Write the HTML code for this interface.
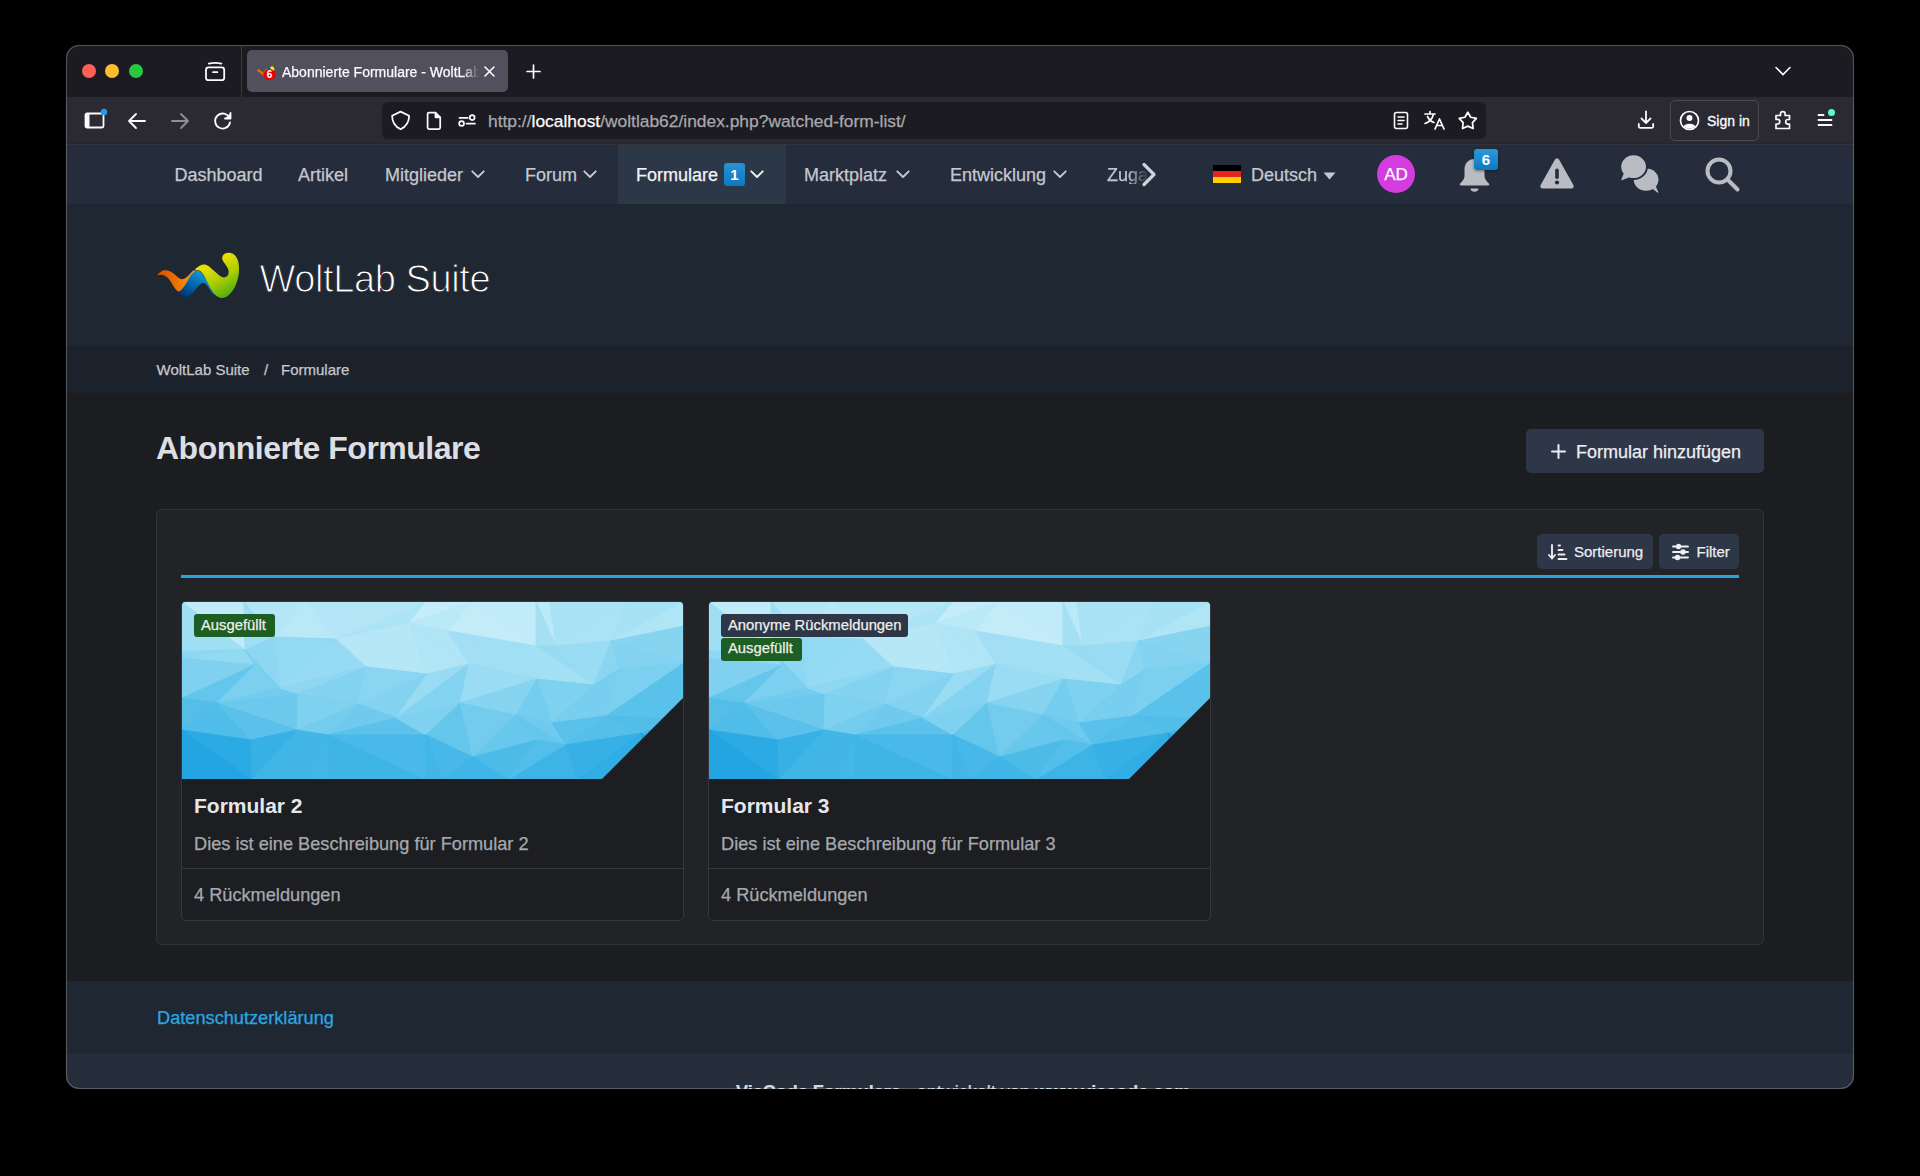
<!DOCTYPE html>
<html><head><meta charset="utf-8">
<style>
*{box-sizing:border-box;margin:0;padding:0}
html,body{width:1920px;height:1176px;background:#000;overflow:hidden;font-family:"Liberation Sans",sans-serif}
#win{position:absolute;left:66px;top:45px;width:1788px;height:1044px;border-radius:13px;overflow:hidden;background:#1c1b22}
#bd{position:absolute;left:66px;top:45px;width:1788px;height:1044px;border-radius:13px;border:1px solid rgba(255,255,255,0.24);box-shadow:inset 0 0 0.8px rgba(255,255,255,0.25), 0 0 0.8px rgba(255,255,255,0.2);pointer-events:none}
#s{position:absolute;left:-66px;top:-45px;width:1920px;height:1176px}
.a{position:absolute}
.t{position:absolute;white-space:nowrap;line-height:1;-webkit-text-stroke:0.25px currentColor}
.tl{position:absolute;top:64px;width:14px;height:14px;border-radius:50%}
svg{position:absolute;overflow:visible}
</style></head>
<body>
<svg width="0" height="0" style="position:absolute"><defs><symbol id="poly" viewBox="0 0 502 178" stroke-width="0.9" stroke-linejoin="round"><path d="M0 0 L62 0 L63 48 Z" fill="#c0ebf8" stroke="#c0ebf8"/><path d="M0 0 L63 48 L0 49 Z" fill="#a0def4" stroke="#a0def4"/><path d="M62 0 L123 0 L93 35 Z" fill="#b5e6f7" stroke="#b5e6f7"/><path d="M62 0 L93 35 L63 48 Z" fill="#9fdef4" stroke="#9fdef4"/><path d="M123 0 L181 0 L155 37 Z" fill="#b3e6f6" stroke="#b3e6f6"/><path d="M123 0 L155 37 L93 35 Z" fill="#b9e8f7" stroke="#b9e8f7"/><path d="M181 0 L244 0 L155 37 Z" fill="#b4e6f6" stroke="#b4e6f6"/><path d="M244 0 L227 21 L155 37 Z" fill="#ace3f5" stroke="#ace3f5"/><path d="M244 0 L290 0 L227 21 Z" fill="#c5edf9" stroke="#c5edf9"/><path d="M290 0 L266 29 L227 21 Z" fill="#bae9f7" stroke="#bae9f7"/><path d="M290 0 L354 0 L354 44 Z" fill="#c1ebf8" stroke="#c1ebf8"/><path d="M290 0 L354 44 L266 29 Z" fill="#c3ecf8" stroke="#c3ecf8"/><path d="M354 0 L368 0 L374 44 Z" fill="#bae9f7" stroke="#bae9f7"/><path d="M354 0 L374 44 L354 44 Z" fill="#a4e0f4" stroke="#a4e0f4"/><path d="M368 0 L445 0 L374 44 Z" fill="#a9e2f5" stroke="#a9e2f5"/><path d="M445 0 L429 39 L374 44 Z" fill="#abe2f5" stroke="#abe2f5"/><path d="M445 0 L502 0 L429 39 Z" fill="#a7e1f5" stroke="#a7e1f5"/><path d="M502 0 L502 24 L429 39 Z" fill="#b0e5f6" stroke="#b0e5f6"/><path d="M0 49 L63 48 L0 56 Z" fill="#8ed7f2" stroke="#8ed7f2"/><path d="M63 48 L73 63 L0 56 Z" fill="#92d9f2" stroke="#92d9f2"/><path d="M63 48 L93 35 L98 86 Z" fill="#8dd7f2" stroke="#8dd7f2"/><path d="M63 48 L98 86 L73 63 Z" fill="#7bcfef" stroke="#7bcfef"/><path d="M93 35 L155 37 L98 86 Z" fill="#92d9f2" stroke="#92d9f2"/><path d="M155 37 L185 65 L98 86 Z" fill="#96daf3" stroke="#96daf3"/><path d="M155 37 L227 21 L185 65 Z" fill="#b6e7f7" stroke="#b6e7f7"/><path d="M227 21 L245 72 L185 65 Z" fill="#b5e7f7" stroke="#b5e7f7"/><path d="M227 21 L266 29 L287 62 Z" fill="#b0e5f6" stroke="#b0e5f6"/><path d="M227 21 L287 62 L245 72 Z" fill="#b0e5f6" stroke="#b0e5f6"/><path d="M266 29 L354 44 L355 77 Z" fill="#a1dff4" stroke="#a1dff4"/><path d="M266 29 L355 77 L287 62 Z" fill="#a3dff4" stroke="#a3dff4"/><path d="M354 44 L374 44 L412 83 Z" fill="#97dbf3" stroke="#97dbf3"/><path d="M354 44 L412 83 L355 77 Z" fill="#a4e0f4" stroke="#a4e0f4"/><path d="M374 44 L429 39 L412 83 Z" fill="#9adcf3" stroke="#9adcf3"/><path d="M429 39 L437 67 L412 83 Z" fill="#8ad6f1" stroke="#8ad6f1"/><path d="M429 39 L502 24 L502 61 Z" fill="#87d4f1" stroke="#87d4f1"/><path d="M429 39 L502 61 L437 67 Z" fill="#83d3f0" stroke="#83d3f0"/><path d="M0 56 L73 63 L0 96 Z" fill="#80d1f0" stroke="#80d1f0"/><path d="M73 63 L35 101 L0 96 Z" fill="#64c6ec" stroke="#64c6ec"/><path d="M73 63 L98 86 L35 101 Z" fill="#7bcfef" stroke="#7bcfef"/><path d="M98 86 L116 92 L35 101 Z" fill="#73ccee" stroke="#73ccee"/><path d="M98 86 L185 65 L116 92 Z" fill="#8dd7f1" stroke="#8dd7f1"/><path d="M185 65 L176 102 L116 92 Z" fill="#82d2f0" stroke="#82d2f0"/><path d="M185 65 L245 72 L176 102 Z" fill="#8ad5f1" stroke="#8ad5f1"/><path d="M245 72 L214 116 L176 102 Z" fill="#83d2f0" stroke="#83d2f0"/><path d="M245 72 L287 62 L214 116 Z" fill="#98dbf3" stroke="#98dbf3"/><path d="M287 62 L278 101 L214 116 Z" fill="#84d3f0" stroke="#84d3f0"/><path d="M287 62 L355 77 L278 101 Z" fill="#9adcf3" stroke="#9adcf3"/><path d="M355 77 L334 113 L278 101 Z" fill="#87d4f1" stroke="#87d4f1"/><path d="M355 77 L412 83 L370 121 Z" fill="#7fd1f0" stroke="#7fd1f0"/><path d="M355 77 L370 121 L334 113 Z" fill="#74ccee" stroke="#74ccee"/><path d="M412 83 L437 67 L370 121 Z" fill="#77ceee" stroke="#77ceee"/><path d="M437 67 L424 114 L370 121 Z" fill="#77ceef" stroke="#77ceef"/><path d="M437 67 L502 61 L424 114 Z" fill="#7cd0ef" stroke="#7cd0ef"/><path d="M502 61 L502 117 L424 114 Z" fill="#5ac1ea" stroke="#5ac1ea"/><path d="M0 96 L35 101 L0 128 Z" fill="#54bee9" stroke="#54bee9"/><path d="M35 101 L69 138 L0 128 Z" fill="#4fbce9" stroke="#4fbce9"/><path d="M35 101 L116 92 L115 128 Z" fill="#6cc9ed" stroke="#6cc9ed"/><path d="M35 101 L115 128 L69 138 Z" fill="#5bc1eb" stroke="#5bc1eb"/><path d="M116 92 L176 102 L115 128 Z" fill="#7ed1ef" stroke="#7ed1ef"/><path d="M176 102 L146 133 L115 128 Z" fill="#75cdee" stroke="#75cdee"/><path d="M176 102 L214 116 L146 133 Z" fill="#6fcaed" stroke="#6fcaed"/><path d="M214 116 L244 133 L146 133 Z" fill="#5cc2eb" stroke="#5cc2eb"/><path d="M214 116 L278 101 L244 133 Z" fill="#7fd1f0" stroke="#7fd1f0"/><path d="M278 101 L291 155 L244 133 Z" fill="#65c6ec" stroke="#65c6ec"/><path d="M278 101 L334 113 L291 155 Z" fill="#73ccee" stroke="#73ccee"/><path d="M334 113 L355 138 L291 155 Z" fill="#67c7ec" stroke="#67c7ec"/><path d="M334 113 L370 121 L384 143 Z" fill="#6fcaed" stroke="#6fcaed"/><path d="M334 113 L384 143 L355 138 Z" fill="#65c6ec" stroke="#65c6ec"/><path d="M370 121 L424 114 L384 143 Z" fill="#5ac1ea" stroke="#5ac1ea"/><path d="M424 114 L459 131 L384 143 Z" fill="#55bfea" stroke="#55bfea"/><path d="M424 114 L502 117 L459 131 Z" fill="#51bde9" stroke="#51bde9"/><path d="M502 117 L502 150 L459 131 Z" fill="#42b6e7" stroke="#42b6e7"/><path d="M0 128 L69 138 L70 178 Z" fill="#2baae3" stroke="#2baae3"/><path d="M0 128 L70 178 L0 178 Z" fill="#22a5e1" stroke="#22a5e1"/><path d="M69 138 L115 128 L70 178 Z" fill="#37b1e5" stroke="#37b1e5"/><path d="M115 128 L128 178 L70 178 Z" fill="#40b5e6" stroke="#40b5e6"/><path d="M115 128 L146 133 L128 178 Z" fill="#42b6e7" stroke="#42b6e7"/><path d="M146 133 L146 178 L128 178 Z" fill="#45b7e7" stroke="#45b7e7"/><path d="M146 133 L244 133 L244 178 Z" fill="#48b9e8" stroke="#48b9e8"/><path d="M146 133 L244 178 L146 178 Z" fill="#3fb5e6" stroke="#3fb5e6"/><path d="M244 133 L291 155 L260 178 Z" fill="#47b8e8" stroke="#47b8e8"/><path d="M244 133 L260 178 L244 178 Z" fill="#41b6e7" stroke="#41b6e7"/><path d="M291 155 L355 138 L327 178 Z" fill="#4dbbe8" stroke="#4dbbe8"/><path d="M291 155 L327 178 L260 178 Z" fill="#41b5e7" stroke="#41b5e7"/><path d="M355 138 L384 143 L327 178 Z" fill="#53bee9" stroke="#53bee9"/><path d="M384 143 L396 178 L327 178 Z" fill="#3eb4e6" stroke="#3eb4e6"/><path d="M384 143 L459 131 L396 178 Z" fill="#36b0e5" stroke="#36b0e5"/><path d="M459 131 L466 178 L396 178 Z" fill="#30ade4" stroke="#30ade4"/><path d="M459 131 L502 150 L502 178 Z" fill="#2baae3" stroke="#2baae3"/><path d="M459 131 L502 178 L466 178 Z" fill="#21a4e1" stroke="#21a4e1"/></symbol></defs></svg>
<div id="win"><div id="s">
<div class="a" style="left:0px;top:0px;width:1920px;height:97px;background:#1c1b22;"></div>
<div class="tl" style="left:81.6px;background:#fe5f57"></div><div class="tl" style="left:105px;background:#febc2e"></div><div class="tl" style="left:129px;background:#28c840"></div>
<svg style="left:204px;top:60px" width="22" height="22" viewBox="0 0 22 22" fill="none" stroke="#fbfbfe" stroke-width="1.8" stroke-linecap="round">
<rect x="2" y="7.4" width="18.2" height="12.8" rx="2.5"/><path d="M4.8 3.6 Q11 2.2 17.4 3.6"/><path d="M9 12.2h4.4"/></svg>
<div class="a" style="left:241px;top:46px;width:1px;height:51px;background:#3a3941;"></div>
<div class="a" style="left:247px;top:50px;width:261px;height:42px;background:#52505d;border-radius:5px"></div>
<svg style="left:256px;top:62px" width="20" height="20" viewBox="0 0 20 20">
<path d="M2.2 8.2 C4 9 5.5 10.5 6.8 11.8 L10.5 8.2" stroke="#f07000" stroke-width="2.2" fill="none" stroke-linecap="round"/><path d="M7 12 L9.5 9.5" stroke="#1a70c0" stroke-width="1.5"/>
<ellipse cx="16.4" cy="6.8" rx="1.9" ry="2.6" fill="#f2ee00" transform="rotate(-20 16.4 6.8)"/>
<circle cx="13.6" cy="12.6" r="5.7" fill="#e60000"/>
<text x="13.6" y="16.3" font-size="10" font-weight="700" fill="#fff" text-anchor="middle" font-family="Liberation Sans">6</text></svg>
<div class="t" style="left:282px;top:64.6px;font-size:14px;color:#fbfbfe;font-weight:400;width:197px;overflow:hidden;-webkit-mask-image:linear-gradient(90deg,#000 92%,transparent)">Abonnierte Formulare - WoltLab Suite</div>
<svg style="left:484px;top:66px" width="11" height="11" viewBox="0 0 11 11" stroke="#fbfbfe" stroke-width="1.6" stroke-linecap="round"><path d="M1 1L10 10M10 1L1 10"/></svg>
<svg style="left:526px;top:64px" width="15" height="15" viewBox="0 0 15 15" stroke="#fbfbfe" stroke-width="1.7" stroke-linecap="round"><path d="M7.5 1v13M1 7.5h13"/></svg>
<svg style="left:1775px;top:66px" width="16" height="10" viewBox="0 0 16 10" fill="none" stroke="#fbfbfe" stroke-width="1.6" stroke-linecap="round"><path d="M1 1.5l7 7 7-7"/></svg>
<div class="a" style="left:0px;top:97px;width:1920px;height:47px;background:#2b2a33;"></div>
<svg style="left:84px;top:108px" width="24" height="22" viewBox="0 0 24 22" fill="none" stroke="#fbfbfe" stroke-width="1.8">
<rect x="1.5" y="5.5" width="18" height="14" rx="1.5"/><rect x="2" y="6" width="3.5" height="13" fill="#fbfbfe" stroke="none"/><circle cx="20" cy="4" r="3.2" fill="#1f9bf0" stroke="none"/></svg>
<svg style="left:127px;top:112px" width="20" height="18" viewBox="0 0 20 18" fill="none" stroke="#fbfbfe" stroke-width="1.8" stroke-linecap="round" stroke-linejoin="round"><path d="M18 9H2M9 2L2 9l7 7"/></svg>
<svg style="left:170px;top:112px" width="20" height="18" viewBox="0 0 20 18" fill="none" stroke="#8f8f95" stroke-width="1.8" stroke-linecap="round" stroke-linejoin="round"><path d="M2 9h16M11 2l7 7-7 7"/></svg>
<svg style="left:213px;top:111px" width="20" height="20" viewBox="0 0 20 20" fill="none" stroke="#fbfbfe" stroke-width="1.8" stroke-linecap="round"><path d="M16.5 7A7.5 7.5 0 1 0 17 11.5"/><path d="M17.5 2v5.5h-5.5" fill="#fbfbfe" stroke-linejoin="round"/></svg>
<div class="a" style="left:382px;top:102px;width:1104px;height:37px;background:#1c1b22;border-radius:6px"></div>
<svg style="left:385px;top:105px" width="100" height="32" viewBox="0 0 100 32" fill="none" stroke="#fbfbfe" stroke-width="1.75" stroke-linejoin="round" stroke-linecap="round">
<path d="M15.6 6.6 L24.1 10.8 C24.1 17.5 21.5 21.5 15.6 24.3 C9.7 21.5 7.1 17.5 7.1 10.8 Z"/>
<path d="M44 7.6 H50.5 L55.2 12.3 V22.6 Q55.2 24 53.8 24 H44 Q42.6 24 42.6 22.6 V9 Q42.6 7.6 44 7.6Z"/><path d="M50.5 7.8 V12.3 H55" fill="#fbfbfe"/>
<path d="M74.5 12.8 H82.8 M81.5 18.5 H90"/><circle cx="87.2" cy="12.6" r="2.4"/><circle cx="76.6" cy="18.5" r="2.4"/>
</svg>
<div class="t" style="left:488px;top:112.9px;font-size:17.4px;color:#a8a8ad;font-weight:400;">http://<span style="color:#fbfbfe">localhost</span>/woltlab62/index.php?watched-form-list/</div>
<svg style="left:1393px;top:111px" width="17" height="19" viewBox="0 0 17 19" fill="none" stroke="#fbfbfe" stroke-width="1.6" stroke-linecap="round"><rect x="1.5" y="1.5" width="13" height="16" rx="2"/><path d="M5 6h6M5 9.5h6M5 13h4"/></svg>
<svg style="left:1424px;top:110px" width="22" height="20" viewBox="0 0 22 20" fill="none" stroke="#fbfbfe" stroke-width="1.7" stroke-linecap="round" stroke-linejoin="round"><path d="M1 4h10M6 1.5V4M9.5 4c-1 4.5-4 8-8.5 9.5M3.5 6.5c1.5 3 3.5 5 6.5 6"/><path d="M11 19l4.5-10 4.5 10M12.5 15.5h6"/></svg>
<svg style="left:1458px;top:110px" width="20" height="21" viewBox="0 0 20 21" fill="none" stroke="#fbfbfe" stroke-width="1.75" stroke-linejoin="round"><path d="M9.80 2.20 L12.68 7.24 L18.36 8.42 L14.46 12.71 L15.09 18.48 L9.80 16.10 L4.51 18.48 L5.14 12.71 L1.24 8.42 L6.92 7.24Z"/></svg>
<svg style="left:1636px;top:110px" width="20" height="20" viewBox="0 0 20 20" fill="none" stroke="#fbfbfe" stroke-width="1.8" stroke-linecap="round" stroke-linejoin="round"><path d="M10 1.5v11.5M5.5 8.5l4.5 4.5 4.5-4.5M2.8 14v2.6q0 1.2 1.2 1.2h12q1.2 0 1.2-1.2V14"/></svg>
<div class="a" style="left:1670px;top:100px;width:89px;height:41px;background:transparent;border-radius:5px;border:1.5px solid #4a4951"></div>
<svg style="left:1679px;top:110px" width="21" height="21" viewBox="0 0 21 21"><defs><clipPath id="cc"><circle cx="10.5" cy="10.5" r="8.2"/></clipPath></defs><circle cx="10.5" cy="10.5" r="9" fill="none" stroke="#fbfbfe" stroke-width="1.7"/><circle cx="10.5" cy="8" r="3" fill="#fbfbfe"/><ellipse cx="10.5" cy="17.8" rx="6.5" ry="4" fill="#fbfbfe" clip-path="url(#cc)"/></svg>
<div class="t" style="left:1707px;top:114.4px;font-size:14px;color:#fbfbfe;font-weight:400;-webkit-text-stroke:0.3px #fbfbfe">Sign in</div>
<svg style="left:1774px;top:110px" width="19" height="20" viewBox="0 0 19 20" fill="none" stroke="#fbfbfe" stroke-width="1.7" stroke-linejoin="round"><path d="M2 9V5.5h4.5V4a2.3 2.3 0 0 1 4.6 0v1.5h4.4v4h-1.5a2.3 2.3 0 0 0 0 4.6h1.5v4.4H2v-4.5h1.5a2.3 2.3 0 0 0 0-4.6H2z"/></svg>
<svg style="left:1816px;top:108px" width="22" height="20" viewBox="0 0 22 20" fill="none" stroke="#fbfbfe" stroke-width="1.8" stroke-linecap="round"><path d="M2.5 7h5M2.5 12h13M2.5 17h13"/><circle cx="15.5" cy="4.5" r="3.5" fill="#54ffbd" stroke="none"/></svg>
<div class="a" style="left:0px;top:143px;width:1920px;height:1px;background:#26252b;"></div>
<div class="a" style="left:0px;top:144px;width:1920px;height:1px;background:#35343c;"></div>
<div class="a" style="left:0px;top:145px;width:1920px;height:59px;background:#252d3c;"></div>
<div class="a" style="left:618px;top:145px;width:168px;height:59px;background:#2c3748;"></div>
<div class="t" style="left:174.5px;top:166.2px;font-size:18px;color:#c5c8ce;font-weight:400;">Dashboard</div>
<div class="t" style="left:298px;top:166.2px;font-size:18px;color:#c5c8ce;font-weight:400;">Artikel</div>
<div class="t" style="left:385px;top:166.2px;font-size:18px;color:#c5c8ce;font-weight:400;">Mitglieder</div>
<div class="t" style="left:525px;top:166.2px;font-size:18px;color:#c5c8ce;font-weight:400;">Forum</div>
<div class="t" style="left:804px;top:166.2px;font-size:18px;color:#c5c8ce;font-weight:400;">Marktplatz</div>
<div class="t" style="left:950px;top:166.2px;font-size:18px;color:#c5c8ce;font-weight:400;">Entwicklung</div>
<div class="t" style="left:636px;top:166.2px;font-size:18px;color:#f2f3f5;font-weight:400;">Formulare</div>
<div class="t" style="left:1107px;top:166.2px;font-size:18px;color:#c5c8ce;font-weight:400;width:44px;overflow:hidden;-webkit-mask-image:linear-gradient(90deg,#000 45%,transparent 95%)">Zugang</div>
<svg style="left:471px;top:170px" width="14" height="9" viewBox="0 0 14 9" fill="none" stroke="#c5c8ce" stroke-width="1.9" stroke-linecap="round" stroke-linejoin="round"><path d="M1.3 1.3l5.7 5.7 5.7-5.7"/></svg>
<svg style="left:583px;top:170px" width="14" height="9" viewBox="0 0 14 9" fill="none" stroke="#c5c8ce" stroke-width="1.9" stroke-linecap="round" stroke-linejoin="round"><path d="M1.3 1.3l5.7 5.7 5.7-5.7"/></svg>
<svg style="left:896px;top:170px" width="14" height="9" viewBox="0 0 14 9" fill="none" stroke="#c5c8ce" stroke-width="1.9" stroke-linecap="round" stroke-linejoin="round"><path d="M1.3 1.3l5.7 5.7 5.7-5.7"/></svg>
<svg style="left:1053px;top:170px" width="14" height="9" viewBox="0 0 14 9" fill="none" stroke="#c5c8ce" stroke-width="1.9" stroke-linecap="round" stroke-linejoin="round"><path d="M1.3 1.3l5.7 5.7 5.7-5.7"/></svg>
<svg style="left:750px;top:170px" width="14" height="9" viewBox="0 0 14 9" fill="none" stroke="#f2f3f5" stroke-width="1.9" stroke-linecap="round" stroke-linejoin="round"><path d="M1.3 1.3l5.7 5.7 5.7-5.7"/></svg>
<div class="a" style="left:724px;top:163px;width:21px;height:23px;background:linear-gradient(#2893d4,#0c78c0);border-radius:3px"></div>
<div class="t" style="left:724px;top:167.3px;font-size:15px;color:#fff;font-weight:700;-webkit-text-stroke:0;width:21px;text-align:center">1</div>
<svg style="left:1141px;top:162px" width="16" height="25" viewBox="0 0 16 25" fill="none" stroke="#d0d3d8" stroke-width="3.2" stroke-linecap="round" stroke-linejoin="round"><path d="M3 2.5l10 10-10 10"/></svg>
<div class="a" style="left:1213px;top:165.2px;width:28px;height:6.1px;background:#000;"></div>
<div class="a" style="left:1213px;top:171.2px;width:28px;height:6.1px;background:#e2231e;"></div>
<div class="a" style="left:1213px;top:177.2px;width:28px;height:6px;background:#ffcd00;"></div>
<div class="t" style="left:1251px;top:166.2px;font-size:18px;color:#c5c8ce;font-weight:400;">Deutsch</div>
<svg style="left:1323px;top:172px" width="13" height="8" viewBox="0 0 13 8"><path d="M0.5 0.5h12l-6 7z" fill="#c5c8ce"/></svg>
<div class="a" style="left:1377px;top:155px;width:38px;height:38px;background:#d43ce0;border-radius:50%"></div>
<div class="t" style="left:1377px;top:166.1px;font-size:17px;color:#fff;font-weight:400;width:38px;text-align:center">AD</div>
<svg style="left:1458px;top:156px" width="33" height="36" viewBox="0 0 33 36"><path d="M16.5 3c-6 0-10 4.6-10 10.5v6.5c0 2.5-1.3 4.6-4.4 7.5-.8.8-.3 2 .8 2h27.2c1.1 0 1.6-1.2.8-2-3.1-2.9-4.4-5-4.4-7.5v-6.5C26.5 7.6 22.5 3 16.5 3z" fill="#b9bcc2"/><path d="M12.5 32.5h8c0 2-1.8 3.3-4 3.3s-4-1.3-4-3.3z" fill="#b9bcc2"/></svg>
<div class="a" style="left:1474px;top:149px;width:24px;height:21px;background:linear-gradient(#2c9ad8,#0c78c0);border-radius:3px;box-shadow:0 1px 3px rgba(0,0,0,0.45)"></div>
<div class="t" style="left:1474px;top:152.3px;font-size:15px;color:#fff;font-weight:700;-webkit-text-stroke:0;width:24px;text-align:center">6</div>
<svg style="left:1540px;top:157px" width="34" height="32" viewBox="0 0 34 32"><path d="M17 1.5c.9 0 1.7.5 2.2 1.3l14.2 25.2c.9 1.7-.3 3.5-2.2 3.5H2.8C.9 31.5-.3 29.7.6 28L14.8 2.8c.5-.8 1.3-1.3 2.2-1.3z" fill="#b9bcc2"/><path d="M17 13.2v7" stroke="#252d3c" stroke-width="3.6" stroke-linecap="round"/><circle cx="17" cy="25.5" r="2.1" fill="#252d3c"/></svg>
<svg style="left:1615px;top:150px" width="50" height="48" viewBox="0 0 50 48">
<ellipse cx="31.1" cy="29.6" rx="12.4" ry="11.2" fill="#b9bcc2"/><path d="M36.5 37.5 L42.9 42.4 L39.5 34.5Z" fill="#b9bcc2" stroke="#b9bcc2" stroke-width="1" stroke-linejoin="round"/>
<ellipse cx="18.6" cy="16.7" rx="14.3" ry="13.3" fill="#252d3c"/><path d="M8.5 22 L5.5 31 L15.5 27.5Z" fill="#252d3c" stroke="#252d3c" stroke-width="3" stroke-linejoin="round"/>
<ellipse cx="18.6" cy="16.7" rx="12.4" ry="11.4" fill="#b9bcc2"/><path d="M9.5 23 L6.7 29.8 L14 27Z" fill="#b9bcc2" stroke="#b9bcc2" stroke-width="1" stroke-linejoin="round"/>
</svg>
<svg style="left:1705px;top:157px" width="35" height="35" viewBox="0 0 35 35" fill="none" stroke="#b9bcc2" stroke-width="4" stroke-linecap="round"><circle cx="14" cy="14" r="11.5"/><path d="M22.5 22.5l10 10"/></svg>
<div class="a" style="left:0px;top:204px;width:1920px;height:142px;background:#1f2733;"></div>
<svg style="left:150px;top:245px" width="100" height="60" viewBox="0 0 1920 1152">
<defs>
<linearGradient id="gO" x1="0" y1="0" x2="1" y2="0"><stop offset="0" stop-color="#d84e00"/><stop offset="0.6" stop-color="#f07a00"/><stop offset="1" stop-color="#ffaa10"/></linearGradient>
<linearGradient id="gB" x1="0" y1="1" x2="0.7" y2="0"><stop offset="0" stop-color="#002a60"/><stop offset="0.45" stop-color="#0060a8"/><stop offset="1" stop-color="#1aa0dc"/></linearGradient>
<linearGradient id="gY" x1="0" y1="0" x2="0.6" y2="1"><stop offset="0" stop-color="#f0c040"/><stop offset="0.35" stop-color="#e8e000"/><stop offset="0.7" stop-color="#a8cc00"/><stop offset="1" stop-color="#58b010"/></linearGradient>
</defs>
<path d="M140 590 C200 470 320 450 450 545 C520 600 570 660 630 655 C700 645 760 560 830 490 L890 490 C800 560 740 700 680 810 C640 880 600 905 555 900 C470 860 420 720 350 640 C290 580 220 550 140 590Z" fill="url(#gO)"/>
<path d="M545 895 C620 880 680 760 760 620 C820 520 870 480 920 490 C980 500 1030 580 1090 680 C1150 790 1200 880 1260 940 L1220 950 C1140 860 1090 740 1030 730 C960 730 900 830 820 920 C760 990 700 1020 640 990 C600 970 570 930 545 895Z" fill="url(#gB)"/>
<path d="M860 470 C940 390 1000 365 1060 375 C1150 395 1250 540 1380 615 C1450 640 1520 600 1510 500 C1500 420 1420 360 1390 280 C1370 190 1450 140 1530 150 C1650 170 1710 280 1710 450 C1710 650 1640 870 1480 990 C1380 1050 1280 1000 1220 920 C1150 830 1100 700 1040 590 C1000 520 960 480 910 485 C890 485 875 480 860 470Z" fill="url(#gY)"/>
</svg>
<svg style="left:259px;top:250px" width="240" height="50"><text x="0.5" y="42" font-size="38" letter-spacing="-0.4" fill="#ffffff" stroke="#1f2733" stroke-width="1.1" font-family="Liberation Sans">WoltLab Suite</text></svg>
<div class="a" style="left:0px;top:346px;width:1920px;height:47px;background:#1c222c;"></div>
<div class="t" style="left:156.5px;top:362.0px;font-size:15px;color:#c5c8ce;font-weight:400;">WoltLab Suite</div>
<div class="t" style="left:264px;top:362.0px;font-size:15px;color:#c5c8ce;font-weight:400;">/</div>
<div class="t" style="left:281px;top:362.0px;font-size:15px;color:#c5c8ce;font-weight:400;">Formulare</div>
<div class="a" style="left:0px;top:393px;width:1920px;height:588px;background:#1b1d21;"></div>
<div class="t" style="left:156px;top:431.5px;font-size:32px;color:#dcdee2;font-weight:700;-webkit-text-stroke:0;letter-spacing:-0.5px">Abonnierte Formulare</div>
<div class="a" style="left:1526px;top:429px;width:238px;height:44px;background:#2d3748;border-radius:5px"></div>
<svg style="left:1551px;top:444px" width="15" height="15" viewBox="0 0 15 15" stroke="#eceef1" stroke-width="2" stroke-linecap="round"><path d="M7.5 1v13M1 7.5h13"/></svg>
<div class="t" style="left:1576px;top:442.6px;font-size:18px;color:#eceef1;font-weight:400;">Formular hinzufügen</div>
<div class="a" style="left:156px;top:509px;width:1608px;height:436px;background:#212327;border-radius:5px;border:1px solid #303338"></div>
<div class="a" style="left:1537px;top:534px;width:116px;height:35px;background:#2d3748;border-radius:5px"></div>
<div class="a" style="left:1659px;top:534px;width:80px;height:35px;background:#2d3748;border-radius:5px"></div>
<svg style="left:1548px;top:544px" width="20" height="16" viewBox="0 0 20 16" fill="none" stroke="#eceef1" stroke-width="1.9" stroke-linecap="round" stroke-linejoin="round"><path d="M4 1v13.5M1 11l3 3.5 3-3.5M10.5 1.5h1.5M10.5 6h4M10.5 10.5h6M10.5 15h8"/></svg>
<div class="t" style="left:1574px;top:543.8px;font-size:15px;color:#eceef1;font-weight:400;">Sortierung</div>
<svg style="left:1672px;top:544px" width="17" height="16" viewBox="0 0 17 16" fill="none" stroke="#eceef1" stroke-width="1.9" stroke-linecap="round"><path d="M1 2.5h15M1 8h15M1 13.5h15"/><circle cx="6.5" cy="2.5" r="1.8" fill="#eceef1"/><circle cx="11" cy="8" r="1.8" fill="#eceef1"/><circle cx="5.5" cy="13.5" r="1.8" fill="#eceef1"/></svg>
<div class="t" style="left:1696.5px;top:543.8px;font-size:15px;color:#eceef1;font-weight:400;">Filter</div>
<div class="a" style="left:181px;top:575px;width:1558px;height:2.5px;background:#26a6e0;"></div>
<div class="a" style="left:181px;top:601px;width:503px;height:320px;background:#1c1e22;border-radius:5px;border:1px solid #34373c"></div>
<svg style="position:absolute;left:182px;top:602px;border-radius:4px 4px 0 0;overflow:hidden" width="501" height="177" viewBox="0 0 501 177"><rect width="501" height="177" fill="#6ccbef"/><use href="#poly" width="502" height="178"/><path d="M502 95 L502 178 L419 178Z" fill="#1c1e22"/></svg>
<div class="a" style="left:194px;top:614px;width:81px;height:23px;background:#1d5e22;border-radius:3px"></div>
<div class="t" style="left:201px;top:617.7px;font-size:14.8px;color:#eef0ea;font-weight:400;">Ausgefüllt</div>
<div class="t" style="left:194px;top:795.2px;font-size:21px;color:#e6e7ea;font-weight:700;-webkit-text-stroke:0;">Formular 2</div>
<div class="t" style="left:194px;top:835.1px;font-size:18.2px;color:#a6a9ae;font-weight:400;">Dies ist eine Beschreibung für Formular 2</div>
<div class="a" style="left:182px;top:868px;width:501px;height:1px;background:#34373c;"></div>
<div class="t" style="left:194px;top:886.1px;font-size:18.2px;color:#a6a9ae;font-weight:400;">4 Rückmeldungen</div>
<div class="a" style="left:708px;top:601px;width:503px;height:320px;background:#1c1e22;border-radius:5px;border:1px solid #34373c"></div>
<svg style="position:absolute;left:709px;top:602px;border-radius:4px 4px 0 0;overflow:hidden" width="501" height="177" viewBox="0 0 501 177"><rect width="501" height="177" fill="#6ccbef"/><use href="#poly" width="502" height="178"/><path d="M502 95 L502 178 L419 178Z" fill="#1c1e22"/></svg>
<div class="a" style="left:721px;top:614px;width:187px;height:23px;background:#2d3748;border-radius:3px"></div>
<div class="t" style="left:728px;top:617.7px;font-size:14.8px;color:#eef0ea;font-weight:400;">Anonyme Rückmeldungen</div>
<div class="a" style="left:721px;top:637.5px;width:81px;height:23px;background:#1d5e22;border-radius:3px"></div>
<div class="t" style="left:728px;top:641.2px;font-size:14.8px;color:#eef0ea;font-weight:400;">Ausgefüllt</div>
<div class="t" style="left:721px;top:795.2px;font-size:21px;color:#e6e7ea;font-weight:700;-webkit-text-stroke:0;">Formular 3</div>
<div class="t" style="left:721px;top:835.1px;font-size:18.2px;color:#a6a9ae;font-weight:400;">Dies ist eine Beschreibung für Formular 3</div>
<div class="a" style="left:709px;top:868px;width:501px;height:1px;background:#34373c;"></div>
<div class="t" style="left:721px;top:886.1px;font-size:18.2px;color:#a6a9ae;font-weight:400;">4 Rückmeldungen</div>
<div class="a" style="left:0px;top:981px;width:1920px;height:73px;background:#1f2733;"></div>
<div class="t" style="left:157px;top:1009.4px;font-size:18.2px;color:#2aa8e3;font-weight:400;">Datenschutzerklärung</div>
<div class="a" style="left:0px;top:1054px;width:1920px;height:40px;background:#252d3b;"></div>
<div class="t" style="left:736px;top:1082.8px;font-size:18px;color:#d5d8dc;font-weight:400;"><b>VieCode Formulare</b> - entwickelt von <b>www.viecode.com</b></div>
</div></div>
<div id="bd"></div>
</body></html>
